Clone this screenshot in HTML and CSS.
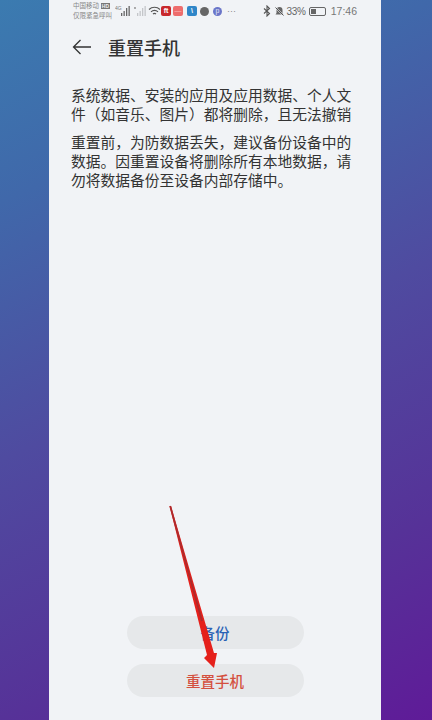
FILE: index.html
```html
<!DOCTYPE html>
<html lang="zh-CN">
<head>
<meta charset="utf-8">
<title>重置手机</title>
<link rel="stylesheet" href="styles.css">
</head>
<body>
<main class="phone">
  <div class="status">
    <div class="status-left">
      <div class="carrier"><span>中国移动 <b class="hd">HD</b></span><span>仅限紧急呼叫</span></div>
      <svg class="sig" width="32" height="12" viewBox="0 0 32 12"><text x="0" y="5" font-size="5" fill="#777" font-family="Liberation Sans">4G</text><g fill="#666"><rect x="6" y="8" width="1.300" height="3"/><rect x="8.500" y="6" width="1.300" height="5"/><rect x="11" y="3" width="1.300" height="8"/><rect x="13.500" y="1" width="1.300" height="10"/></g><circle cx="20" cy="3" r=".9" fill="#888"/><g fill="#c4c6c9"><rect x="22" y="8" width="1.300" height="3"/><rect x="24.500" y="6" width="1.300" height="5"/><rect x="27" y="3" width="1.300" height="8"/><rect x="29.500" y="1" width="1.300" height="10"/></g></svg>
      <svg class="wifi" width="13" height="10" viewBox="0 0 13 10" fill="none" stroke="#555" stroke-width="1.100"><path d="M1 3.500a8 8 0 0 1 11 0M3 5.800a5 5 0 0 1 7 0M5 8a2.200 2.200 0 0 1 3 0"/></svg>
      <span class="app a1">ft</span><span class="app a2">—</span><span class="app a3">\</span><span class="dot d1"></span><span class="dot d2">p</span>
      <span class="more">···</span>
    </div>
    <div class="status-right">
      <svg class="bt" width="8" height="12" viewBox="0 0 8 12" fill="none" stroke="#555" stroke-width="1.100"><path d="M1 3.500l5.500 5L4 11V1l2.500 2.500L1 8.500"/></svg>
      <svg width="11" height="11" viewBox="0 0 11 11"><path d="M5.500 1a3 3 0 0 1 3 3v3l1 1.500h-8l1-1.500V4a3 3 0 0 1 3-3z" fill="#666"/><path d="M1 1l9 9" stroke="#f1f3f6" stroke-width="1.600"/><path d="M1.500 1.500l8 8" stroke="#555"/></svg>
      <span class="pct">33%</span>
      <span class="batt"><i></i></span>
      <span class="time">17:46</span>
    </div>
  </div>
  <header class="bar">
    <svg width="20" height="16" viewBox="0 0 20 16" fill="none" stroke="#333" stroke-width="1.300"><path d="M19 8H1.500M8.500 1L1.500 8l7 7"/></svg>
    <h1>重置手机</h1>
  </header>
  <section class="copy">
    <p>系统数据、安装的应用及应用数据、个人文件（如音乐、图片）都将删除，且无法撤销</p>
    <p>重置前，为防数据丢失，建议备份设备中的数据。因重置设备将删除所有本地数据，请勿将数据备份至设备内部存储中。</p>
  </section>
  <div class="actions">
    <button class="btn blue">备份</button>
    <button class="btn red">重置手机</button>
  </div>
  <svg class="arrow" width="60" height="170" viewBox="0 0 60 170"><path d="M9.500 3L11 3L54 150L57 150L54 165L44 155L47 152Z" fill="#e5201b"/><path d="M10.200 3L42 118" stroke="#ad2a2c" stroke-width="1.800" fill="none"/></svg>
</main>
</body>
</html>
```
FILE: styles.css
```css
*{box-sizing:border-box}
html,body{margin:0;height:100%}
body{width:432px;height:720px;overflow:hidden;background:linear-gradient(155deg,#3b7bb0 0%,#4068aa 22%,#4f4ba0 50%,#563298 78%,#5f1b98 100%);font-family:"Liberation Sans","Noto Sans CJK SC",sans-serif}
.phone{position:relative;margin-left:49px;width:332px;height:720px;background:#f1f3f6;display:flex;flex-direction:column;overflow:hidden}
.status{height:22px;display:flex;justify-content:space-between;align-items:center;padding:0 24px;color:#666;font-size:10px}
.status-left{display:flex;align-items:center;gap:2px}
.carrier{display:flex;flex-direction:column;font-size:6.500px;line-height:10.500px;color:#888;width:40px;white-space:nowrap}
.hd{font-size:5px;background:#777;color:#eee;padding:0 1px}
.wifi{margin-right:-2px;margin-left:-1px}
.app{display:block;width:10px;height:10px;border-radius:2px;color:#fff;font-size:7px;line-height:10px;text-align:center;font-weight:700;overflow:hidden}
.a1{background:#c8282c}.a2{background:#ee6d6d;color:#f6a5a5}.a3{background:#2f86c8;margin-left:2px}
.dot{display:block;width:9px;height:9px;border-radius:50%;margin-left:1px;color:#e5e6f5;font-size:7px;line-height:8px;text-align:center}
.d1{background:#666}.d2{background:#6a75c8;margin-left:2px}
.more{margin-left:3px;color:#888;font-size:9px}
.status-right{display:flex;align-items:center;gap:2px;font-size:10.500px}
.bt{margin-right:1px}
.pct{font-size:10px;letter-spacing:-.3px}
.batt{position:relative;display:block;width:17px;height:9px;border:1px solid #666;border-radius:2px;margin:0 1px}
.batt i{display:block;width:5px;height:5px;margin:1px;background:#666}
.time{margin-left:2px;color:#777}
.bar{height:50px;display:flex;align-items:center;gap:16px;padding:0 0 0 23px}
.bar h1{margin:0;font-size:18px;font-weight:500;color:#333}
.copy{padding:15px 22px 0;color:#333;font-size:14.750px;line-height:19.300px}
.copy p{margin:0 0 8px}
.actions{margin-top:auto;padding-bottom:23px;display:flex;flex-direction:column;align-items:center;gap:15px}
.btn{width:177px;height:33px;border:0;border-radius:17px;background:#e6e8ea;font:500 14.500px "Liberation Sans","Noto Sans CJK SC",sans-serif}
.blue{color:#2a62b5}.red{color:#d4503f}
.arrow{position:absolute;left:111px;top:503px}
```
